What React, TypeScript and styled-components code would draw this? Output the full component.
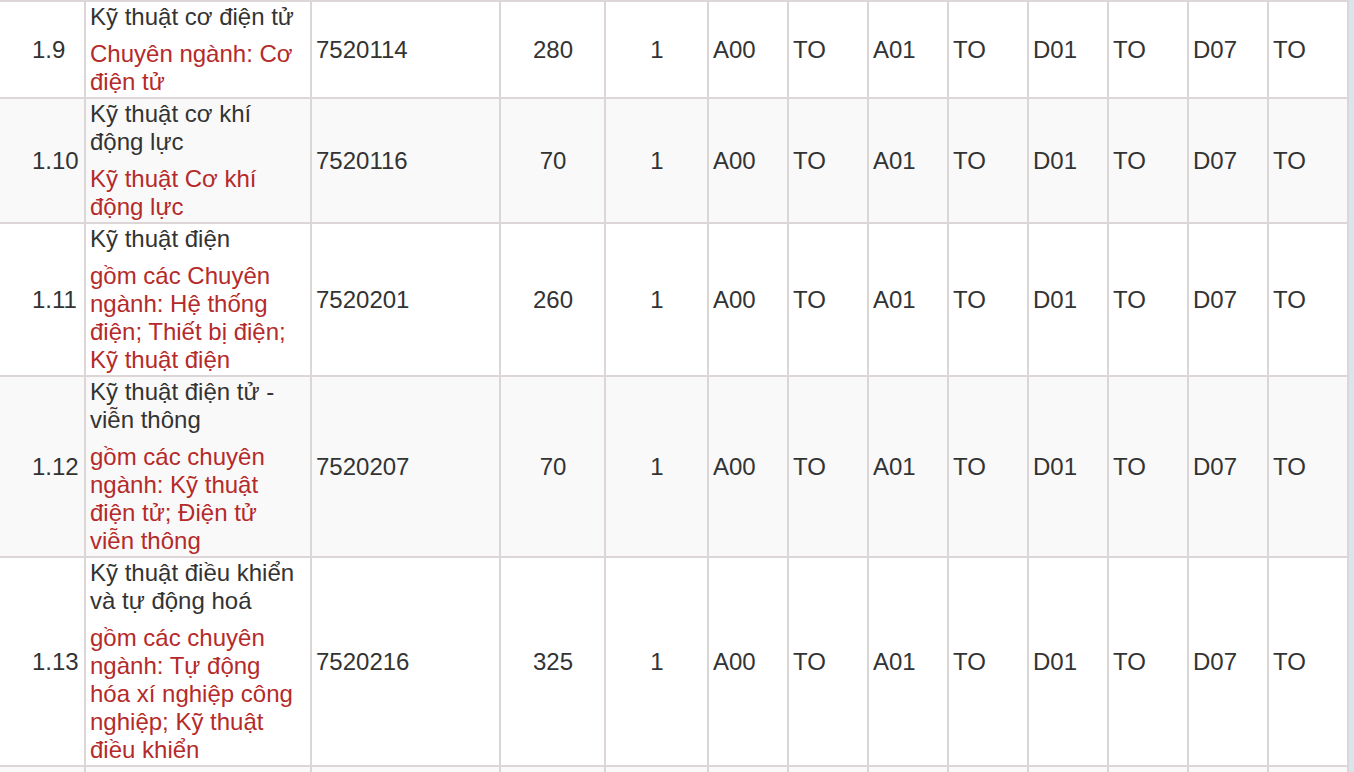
import React from "react";
import styled, { createGlobalStyle } from "styled-components";

type Major = {
  no: string,
  name: string,
  note: string,
  code: string,
  quota: number,
  method: string,
  combos: Array<string>,
}

const majors: Array<Major> = [
  {
    no: "1.9",
    name: "Kỹ thuật cơ điện tử",
    note: "Chuyên ngành: Cơ điện tử",
    code: "7520114",
    quota: 280,
    method: "1",
    combos: ["A00", "A01", "D01", "D07"],
  },
  {
    no: "1.10",
    name: "Kỹ thuật cơ khí động lực",
    note: "Kỹ thuật Cơ khí động lực",
    code: "7520116",
    quota: 70,
    method: "1",
    combos: ["A00", "A01", "D01", "D07"],
  },
  {
    no: "1.11",
    name: "Kỹ thuật điện",
    note: "gồm các Chuyên ngành: Hệ thống điện; Thiết bị điện; Kỹ thuật điện",
    code: "7520201",
    quota: 260,
    method: "1",
    combos: ["A00", "A01", "D01", "D07"],
  },
  {
    no: "1.12",
    name: "Kỹ thuật điện tử - viễn thông",
    note: "gồm các chuyên ngành: Kỹ thuật điện tử; Điện tử viễn thông",
    code: "7520207",
    quota: 70,
    method: "1",
    combos: ["A00", "A01", "D01", "D07"],
  },
  {
    no: "1.13",
    name: "Kỹ thuật điều khiển và tự động hoá",
    note: "gồm các chuyên ngành: Tự động hóa xí nghiệp công nghiệp; Kỹ thuật điều khiển",
    code: "7520216",
    quota: 325,
    method: "1",
    combos: ["A00", "A01", "D01", "D07"],
  },
];

const columnWidths = [86, 226, 189, 105, 103, 80, 80, 80, 80, 80, 80, 80, 80];

const App = () => {
  return (
    <>
      <GlobalStyle />
      <Page>
        <Table>
          <colgroup>
            {columnWidths.map((w, idx) => <Col $w={w} key={idx} />)}
          </colgroup>
          <tbody>
            {majors.map((major, idx) => (
              <MajorRow major={major} striped={idx % 2 === 1} key={major.no} />
            ))}
            {/* next row, scrolled just out of view */}
            <Row $striped>
              {columnWidths.map((_, idx) => <EmptyCell key={idx} />)}
            </Row>
          </tbody>
        </Table>
      </Page>
    </>
  );
}

const MajorRow = ({ major, striped }: { major: Major, striped: boolean }) => {
  return (
    <Row $striped={striped}>
      <NoCell>{major.no}</NoCell>
      <Cell>
        <Name>{major.name}</Name>
        <Note>{major.note}</Note>
      </Cell>
      <Cell>{major.code}</Cell>
      <Cell $center>{major.quota}</Cell>
      <Cell $center>{major.method}</Cell>
      {major.combos.map((combo) => (
        <React.Fragment key={combo}>
          <Cell>{combo}</Cell>
          <Cell>TO</Cell>
        </React.Fragment>
      ))}
    </Row>
  )
};

const GlobalStyle = createGlobalStyle`
  body {
    margin: 0;
    background: #d9e5ee;
  }
`;

const Page = styled.div`
  height: 100vh;
  overflow: hidden;
`;

const Table = styled.table`
  width: 1349px;
  table-layout: fixed;
  border-collapse: separate;
  border-spacing: 0;
  border-top: 2px solid #dcd6d7;
  font-family: "Liberation Sans", Arial, sans-serif;
  font-size: 24px;
  line-height: 28px;
  color: #333;
`;

const Col = styled.col<{ $w: number }>`
  width: ${(p) => p.$w}px;
`;

const Row = styled.tr<{ $striped: boolean }>`
  background: ${(p) => (p.$striped ? "#f9f9f9" : "#fff")};
`;

const Cell = styled.td<{ $center?: boolean }>`
  padding: 1px 3px 1px 4px;
  border-right: 2px solid #dcd6d7;
  border-bottom: 2px solid #dcd6d7;
  vertical-align: middle;
  text-align: ${(p) => (p.$center ? "center" : "left")};
`;

const NoCell = styled(Cell)`
  padding-left: 32px;
  padding-right: 2px;
`;

const EmptyCell = styled(Cell)`
  height: 56px;
`;

const Name = styled.p`
  margin: 0;
`;

const Note = styled.p`
  margin: 9px 0 0;
  color: #b52a2a;
`;

export default App;
